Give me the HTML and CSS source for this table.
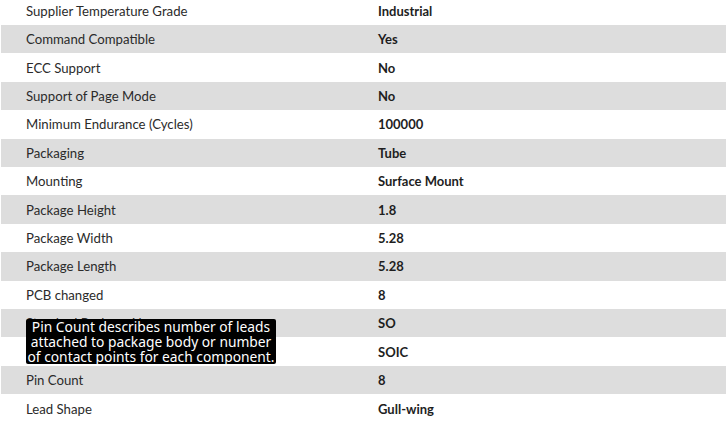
FILE: index.html
```html
<!DOCTYPE html>
<html>
<head>
<meta charset="utf-8">
<link rel="stylesheet" href="styles.css">
</head>
<body>
<div class="specs">
  <div class="row"><div class="label">Supplier Temperature Grade</div><div class="value">Industrial</div></div>
  <div class="row alt"><div class="label">Command Compatible</div><div class="value">Yes</div></div>
  <div class="row"><div class="label">ECC Support</div><div class="value">No</div></div>
  <div class="row alt"><div class="label">Support of Page Mode</div><div class="value">No</div></div>
  <div class="row"><div class="label">Minimum Endurance (Cycles)</div><div class="value">100000</div></div>
  <div class="row alt"><div class="label">Packaging</div><div class="value">Tube</div></div>
  <div class="row"><div class="label">Mounting</div><div class="value">Surface Mount</div></div>
  <div class="row alt"><div class="label">Package Height</div><div class="value">1.8</div></div>
  <div class="row"><div class="label">Package Width</div><div class="value">5.28</div></div>
  <div class="row alt"><div class="label">Package Length</div><div class="value">5.28</div></div>
  <div class="row"><div class="label">PCB changed</div><div class="value">8</div></div>
  <div class="row alt"><div class="label">Standard Package Name</div><div class="value">SO</div></div>
  <div class="row"><div class="label">Supplier Package</div><div class="value">SOIC</div></div>
  <div class="row alt has-tip"><div class="label">Pin Count</div><div class="value">8</div>
    <div class="tooltip">Pin Count describes number of leads attached to package body or number of contact points for each component.</div>
  </div>
  <div class="row"><div class="label">Lead Shape</div><div class="value">Gull-wing</div></div>
</div>
</body>
</html>
```
FILE: styles.css
```css
html, body {
  margin: 0;
  padding: 0;
  background: #ffffff;
}
body {
  font-family: Lato, "Noto Sans", sans-serif;
  font-size: 13.2px;
  color: #262626;
  overflow: hidden;
}
.specs {
  margin: -3.4px 0 0 1px;
  display: flex;
  flex-direction: column;
}
.row {
  display: grid;
  grid-template-columns: 352px 1fr;
  height: 28.42px;
  align-items: center;
  position: relative;
}
.row.alt {
  background: #dddddd;
}
.label {
  padding-left: 25px;
  color: #2b2b2b;
}
.value {
  padding-left: 25px;
  font-weight: 700;
  font-size: 13px;
  color: #1e1e1e;
}
.tooltip {
  position: absolute;
  left: 25px;
  bottom: 30.5px;
  width: 250px;
  box-sizing: border-box;
  padding: 0;
  background: #000000;
  color: #ffffff;
  border-radius: 2px;
  font-family: "Noto Sans", sans-serif;
  font-size: 13.8px;
  line-height: 15px;
  text-align: center;
}
```
